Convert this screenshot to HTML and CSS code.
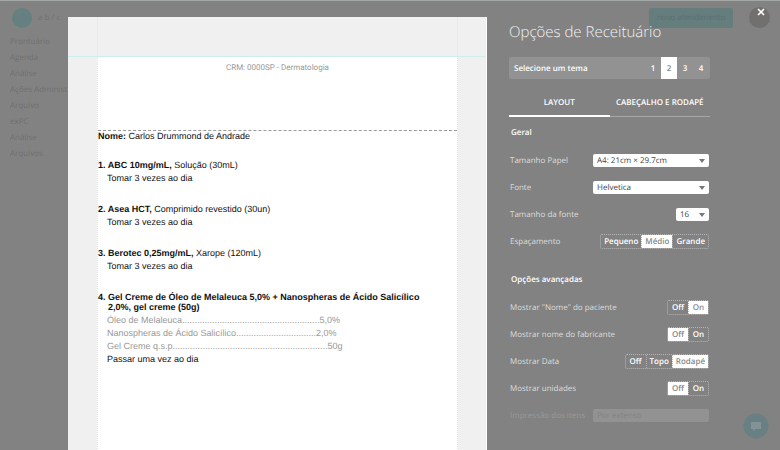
FILE: index.html
```html
<!DOCTYPE html>
<html lang="pt-BR">
<head>
    <meta charset="UTF-8">
    <meta name="viewport" content="width=device-width, initial-scale=1.0">
    <title>Opções de Receituário</title>
    <link rel="stylesheet" href="styles.css">
</head>
<body>

    <!-- App behind the modal -->
    <div class="app">
        <header class="app-header">
            <span class="app-logo"></span>
            <span class="app-name">a b / c</span>
            <button class="app-action" type="button">novo atendimento</button>
            <span class="app-avatar"></span>
        </header>
        <nav class="app-nav">
            <a href="#">Prontuário</a>
            <a href="#">Agenda</a>
            <a href="#">Análise</a>
            <a href="#">Ações Administ.</a>
            <a href="#">Arquivo</a>
            <a href="#">exPC</a>
            <a href="#">Análise</a>
            <a href="#">Arquivos</a>
        </nav>
    </div>

    <!-- Modal -->
    <div class="modal">

        <!-- Prescription preview -->
        <main class="paper">
            <div class="paper-top"><div class="guides"></div></div>
            <div class="paper-body guides">
                <p class="crm">CRM: 0000SP - Dermatologia</p>
                <p class="patient"><b>Nome:</b> Carlos Drummond de Andrade</p>
                <ol class="items">
                    <li>
                        <p class="drug"><b>1. ABC 10mg/mL,</b> Solução (30mL)</p>
                        <p class="dose">Tomar 3 vezes ao dia</p>
                    </li>
                    <li>
                        <p class="drug"><b>2. Asea HCT,</b> Comprimido revestido (30un)</p>
                        <p class="dose">Tomar 3 vezes ao dia</p>
                    </li>
                    <li>
                        <p class="drug"><b>3. Berotec 0,25mg/mL,</b> Xarope (120mL)</p>
                        <p class="dose">Tomar 3 vezes ao dia</p>
                    </li>
                    <li>
                        <p class="drug"><b>4. Gel Creme de Óleo de Melaleuca 5,0% + Nanospheras de Ácido Salicílico 2,0%, gel creme (50g)</b></p>
                        <p class="dose part">Óleo de Melaleuca.......................................................5,0%</p>
                        <p class="dose part">Nanospheras de Ácido Salicílico................................2,0%</p>
                        <p class="dose part">Gel Creme q.s.p..............................................................50g</p>
                        <p class="dose">Passar uma vez ao dia</p>
                    </li>
                </ol>
            </div>
        </main>

        <!-- Options panel -->
        <aside class="options">
            <h1>Opções de Receituário</h1>

            <div class="theme">
                <span class="theme-label">Selecione um tema</span>
                <button type="button">1</button>
                <button type="button" class="active">2</button>
                <button type="button">3</button>
                <button type="button">4</button>
            </div>

            <div class="tabs">
                <button type="button" class="active">LAYOUT</button>
                <button type="button">CABEÇALHO E RODAPÉ</button>
            </div>

            <h2>Geral</h2>
            <div class="row">
                <label for="paper-size">Tamanho Papel</label>
                <span class="select">
                    <select id="paper-size"><option>A4: 21cm × 29.7cm</option></select>
                </span>
            </div>
            <div class="row">
                <label for="font">Fonte</label>
                <span class="select">
                    <select id="font"><option>Helvetica</option></select>
                </span>
            </div>
            <div class="row">
                <label for="font-size">Tamanho da fonte</label>
                <span class="select small">
                    <select id="font-size"><option>16</option></select>
                </span>
            </div>
            <div class="row">
                <span>Espaçamento</span>
                <div class="toggle">
                    <button type="button">Pequeno</button>
                    <button type="button" class="active">Médio</button>
                    <button type="button">Grande</button>
                </div>
            </div>

            <h2 class="advanced">Opções avançadas</h2>
            <div class="row">
                <span>Mostrar "Nome" do paciente</span>
                <div class="toggle">
                    <button type="button">Off</button>
                    <button type="button" class="active">On</button>
                </div>
            </div>
            <div class="row">
                <span>Mostrar nome do fabricante</span>
                <div class="toggle">
                    <button type="button" class="active">Off</button>
                    <button type="button">On</button>
                </div>
            </div>
            <div class="row">
                <span>Mostrar Data</span>
                <div class="toggle">
                    <button type="button">Off</button>
                    <button type="button">Topo</button>
                    <button type="button" class="active">Rodapé</button>
                </div>
            </div>
            <div class="row">
                <span>Mostrar unidades</span>
                <div class="toggle">
                    <button type="button" class="active">Off</button>
                    <button type="button">On</button>
                </div>
            </div>
            <div class="row disabled">
                <label for="header-type">Impressão dos itens</label>
                <span class="select">
                    <select id="header-type" disabled><option>Por extenso</option></select>
                </span>
            </div>
        </aside>

        <button class="close" type="button" aria-label="Fechar">
            <svg viewBox="0 0 8 8" width="8" height="8"><path d="M1 1 L7 7 M7 1 L1 7" stroke="#fff" stroke-width="1.6"/></svg>
        </button>
        <button class="chat" type="button" aria-label="Chat">
            <svg viewBox="0 0 26 26" width="26" height="26">
                <circle cx="13" cy="13" r="12.5" fill="#688083"/>
                <path d="M8 9 h10 v7 h-5 l-3 2 v-2 h-2 z" fill="#839294"/>
            </svg>
        </button>
    </div>

</body>
</html>
```
FILE: styles.css
```css
/* General Reset */
* {
    margin: 0;
    padding: 0;
    box-sizing: border-box;
}

body {
    font-family: 'Open Sans', 'Noto Sans', sans-serif;
    font-size: 8px;
    text-rendering: geometricPrecision;
    height: 100vh;
    background-color: #828282;
    color: #fff;
    overflow: hidden;
}

button {
    font: inherit;
    color: inherit;
    text-rendering: inherit;
    border: none;
    background: none;
    cursor: pointer;
}

/* App behind the modal */
.app {
    border-top: 1px solid #a3a8a7;
    color: #707070;
}

.app-header {
    display: flex;
    align-items: center;
    gap: 6px;
    height: 33px;
    padding: 0 10px 0 12px;
}

.app-logo {
    width: 20px;
    height: 20px;
    border-radius: 50%;
    background-color: #668082;
}

.app-name {
    flex: 1;
}

.app-action {
    width: 84px;
    height: 20px;
    margin-right: 10px;
    border-radius: 2px;
    background-color: #667d7e;
    color: #5a7071;
}

.app-avatar {
    width: 21px;
    height: 21px;
    border-radius: 50%;
    background-color: #72706f;
}

.app-nav {
    display: flex;
    flex-direction: column;
    padding-left: 10px;
}

.app-nav a {
    line-height: 16px;
    color: inherit;
    text-decoration: none;
}

/* Modal */
.modal {
    position: absolute;
    inset: 0;
    display: flex;
    align-items: flex-start;
    padding: 17px 70px 0 68px;
    overflow: hidden;
}

/* Prescription preview */
.paper {
    flex: 1;
    min-height: 100vh;
    padding: 0 28px 0 29px;
    background-color: #f0f0f0;
    font-family: 'Liberation Sans', Arial, sans-serif;
    font-size: 9px;
    line-height: 13px;
    color: #111;
    border-right: 1px solid #fff;
}

.paper-top {
    height: 40px;
    margin: 0 -28px 0 -29px;
    padding: 0 28px 0 29px;
    border-bottom: 1px solid #cdeeea;
}

.guides {
    height: 100%;
    border-left: 1px dotted #d5ebe9;
    border-right: 1px dotted #d5ebe9;
}

.paper-body {
    min-height: 100vh;
    background-color: #fff;
}

.crm {
    height: 74px;
    padding-top: 4px;
    border-bottom: 1px dashed #999;
    font-family: Roboto, sans-serif;
    font-size: 8px;
    text-align: center;
    color: #999;
}

.patient {
    line-height: 10px;
}

.items {
    list-style: none;
}

.items li {
    margin-top: 18px;
}

.drug {
    padding: 1px 24px 2px 10px;
    text-indent: -10px;
    line-height: 10px;
}

.dose {
    padding-left: 9px;
}

.part {
    color: #999;
}

/* Options panel */
.options {
    width: 223px;
    padding: 2px 0 0 22px;
    color: #ddd;
}

h1 {
    font-size: 15px;
    line-height: 26px;
    font-weight: 300;
    color: #f2f2f2;
}

h2 {
    padding-left: 2px;
    font-size: 8px;
    line-height: 16px;
    font-weight: 600;
    color: #fff;
    margin-bottom: 6px;
}

.advanced {
    margin-top: 17px;
}

/* Theme picker */
.theme {
    display: flex;
    align-items: center;
    height: 22px;
    margin-top: 12px;
    padding-right: 1px;
    border-radius: 2px;
    background-color: #929292;
    color: #fff;
    font-weight: 600;
}

.theme-label {
    flex: 1;
    padding-left: 5px;
}

.theme button {
    width: 16px;
    height: 22px;
}

.theme .active {
    background-color: #fff;
    color: #888;
}

/* Tabs */
.tabs {
    display: flex;
    margin: 14px 0 8px;
    color: #fff;
    font-weight: 600;
}

.tabs button {
    flex: 1;
    height: 24px;
    padding-bottom: 4px;
    border-bottom: 1px solid #a8a8a8;
}

.tabs .active {
    border-bottom: 2px solid #fff;
}

/* Option rows */
.row {
    display: flex;
    align-items: center;
    justify-content: space-between;
    height: 27px;
    padding: 0 1px;
}

.select {
    position: relative;
    width: 116px;
}

.select.small {
    width: 33px;
}

.select::after {
    content: "";
    position: absolute;
    right: 4px;
    top: 5px;
    border: 3px solid transparent;
    border-top: 4px solid #777;
    border-bottom: none;
}

select {
    display: block;
    width: 100%;
    height: 13px;
    padding-left: 4px;
    appearance: none;
    border: none;
    border-radius: 2px;
    background-color: #fff;
    color: #444;
    font: inherit;
    text-rendering: inherit;
    line-height: 13px;
}

.toggle {
    display: flex;
    height: 15px;
    border: 1px dotted #b5b5b5;
    border-radius: 2px;
    color: #fff;
    font-weight: 600;
}

.toggle button {
    min-width: 20px;
    padding: 0 3px;
    line-height: 13px;
}

.toggle button + button {
    border-left: 1px dotted #b5b5b5;
}

.toggle .active {
    background-color: #fff;
    color: #888;
}

.disabled {
    color: #999;
}

.disabled select {
    background-color: #929292;
    color: #828282;
    opacity: 1;
}

.disabled .select::after {
    display: none;
}

/* Floating buttons */
.close {
    position: absolute;
    top: 8px;
    right: 15px;
    width: 8px;
    height: 8px;
    line-height: 0;
}

.chat {
    position: absolute;
    right: 11px;
    bottom: 11px;
    width: 26px;
    height: 26px;
    line-height: 0;
}
```
